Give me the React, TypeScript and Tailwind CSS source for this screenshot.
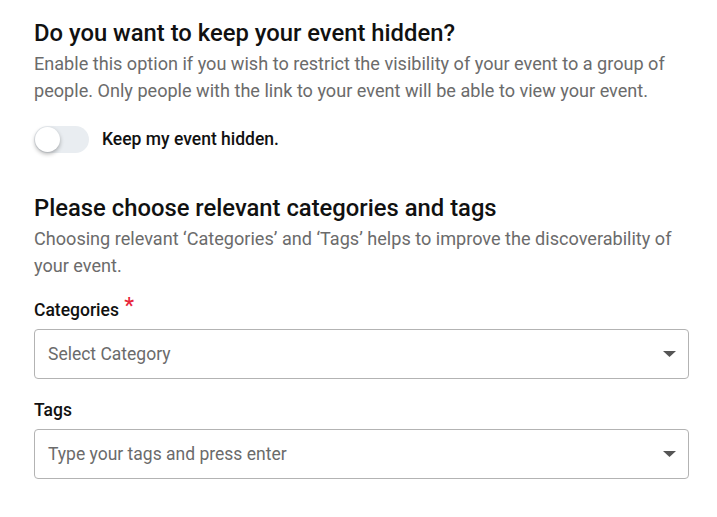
import React from "react";

function Caret() {
  return (
    <svg width="13" height="6" viewBox="0 0 13 6" className="shrink-0">
      <path d="M0 0 L13 0 L6.5 6 Z" fill="#555" />
    </svg>
  );
}

export default function App() {
  return (
    <div
      className="w-[717px] h-[517px] bg-white text-black px-[34px] pt-[18px]"
      style={{ fontFamily: "Roboto, 'Liberation Sans', sans-serif" }}
    >
      <h2 className="text-[23.8px] leading-[30px] font-medium text-[#111]">
        Do you want to keep your event hidden?
      </h2>
      <p className="mt-[2px] text-[18.1px] leading-[27px] text-[#6b6b6b]">
        Enable this option if you wish to restrict the visibility of your event to a group of people. Only people with the link to your event will be able to view your event.
      </p>
      <div className="mt-[22px] flex items-center gap-[13px]">
        <div className="relative w-[55px] h-[27px] rounded-full bg-[#e9edf1]">
          <div className="absolute left-[1px] top-[1px] w-[25px] h-[25px] rounded-full bg-white shadow-[0_2px_4px_rgba(0,0,0,0.3)]" />
        </div>
        <span className="text-[17.5px] font-medium text-[#111]">Keep my event hidden.</span>
      </div>

      <h2 className="mt-[40px] text-[23.8px] leading-[30px] font-medium text-[#111]">
        Please choose relevant categories and tags
      </h2>
      <p className="mt-[2px] text-[18.1px] leading-[27px] text-[#6b6b6b]">
        Choosing relevant ‘Categories’ and ‘Tags’ helps to improve the discoverability of your event.
      </p>

      <div className="mt-[18px] text-[17.5px] font-medium text-[#111] leading-[24px]">
        Categories <span className="text-[#e8273b] text-[22px] relative top-[-3px] left-[1px]">*</span>
      </div>
      <div className="mt-[7px] h-[50px] w-[655px] border border-[#b3b3b3] rounded-[4px] flex items-center justify-between pl-[13px] pr-[12px]">
        <span className="text-[17.5px] text-[#6b6b6b]">Select Category</span>
        <Caret />
      </div>

      <div className="mt-[19px] text-[17.5px] font-medium text-[#111] leading-[24px]">Tags</div>
      <div className="mt-[7px] h-[50px] w-[655px] border border-[#b3b3b3] rounded-[4px] flex items-center justify-between pl-[13px] pr-[12px]">
        <span className="text-[17.5px] text-[#6b6b6b]">Type your tags and press enter</span>
        <Caret />
      </div>
    </div>
  );
}
